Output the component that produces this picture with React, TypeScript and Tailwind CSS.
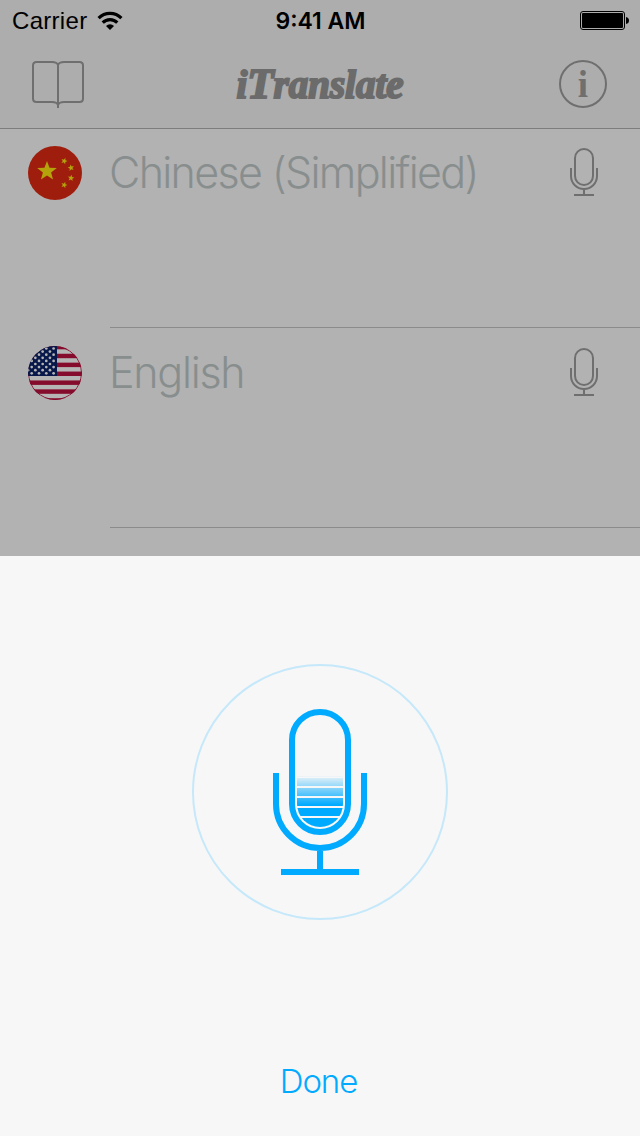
import type { ReactNode } from "react";

const starPath = (cx: number, cy: number, r: number, rotate = 0) => {
	const points: string[] = [];
	for (let i = 0; i < 10; i++) {
		const radius = i % 2 === 0 ? r : r * 0.42;
		const angle = ((i * 36 - 90 + rotate) * Math.PI) / 180;
		points.push(
			`${(cx + radius * Math.cos(angle)).toFixed(2)},${(cy + radius * Math.sin(angle)).toFixed(2)}`,
		);
	}
	return `M${points.join("L")}Z`;
};

function ChinaFlag() {
	return (
		<svg viewBox="0 0 54 54" className="size-[54px]">
			<circle cx="27" cy="27" r="27" fill="#9f1d0d" />
			<g fill="#b4a30a">
				<path d={starPath(19, 25.2, 10.3)} />
				<path d={starPath(36.2, 15, 3.4, 20)} />
				<path d={starPath(43, 21.8, 3.4, -12)} />
				<path d={starPath(43, 32, 3.4, 8)} />
				<path d={starPath(36.2, 39, 3.4, 18)} />
			</g>
		</svg>
	);
}

function UsaFlag() {
	const stripes = [0, 2, 4, 6, 8, 10, 12];
	const rows = [0, 1, 2, 3, 4, 5, 6, 7, 8];
	const cols = [0, 1, 2, 3];

	return (
		<svg viewBox="0 0 54 54" className="size-[54px]">
			<clipPath id="usa">
				<circle cx="27" cy="27" r="27" />
			</clipPath>
			<g clipPath="url(#usa)">
				<rect width="54" height="54" fill="#b5b5b5" />
				{stripes.map((n) => (
					<rect key={n} y={n * 4.45 - 1.15} width="54" height="4.45" fill="#850c2c" />
				))}
				<circle cx="27" cy="27" r="26.5" fill="none" stroke="#850c2c" />
				<rect width="29" height="30" fill="#08184a" />
				{rows.map((row) =>
					cols.map((col) => (
						<circle
							key={`${row}-${col}`}
							cx={25.6 - col * 7.3 - (row % 2) * 3.65}
							cy={2.5 + row * 3.1}
							r="1.35"
							fill="#b5b5b5"
						/>
					)),
				)}
			</g>
		</svg>
	);
}

function MicIcon() {
	return (
		<svg viewBox="0 0 28 48" className="h-12 w-7" fill="none" stroke="#6f6f6f" strokeWidth="2">
			<rect x="5" y="1" width="18" height="36" rx="9" />
			<path d="M1 20v8a13 13 0 0 0 26 0v-8M14 41v6M4 47h20" />
		</svg>
	);
}

function BookIcon() {
	return (
		<svg viewBox="0 0 52 48" className="h-12 w-[52px]" fill="none" stroke="#6f6f6f" strokeWidth="2">
			<path d="M26 48V5c-.8-2-2.5-3-6-3H4.500Q1 2 1 5.500v33Q1 42 4.500 42H20c3.500 0 5.300 1 6 3M26 5c.8-2 2.500-3 6-3h15.500Q51 2 51 5.500v33q0 3.500-3.500 3.500H32c-3.500 0-5.300 1-6 3" />
		</svg>
	);
}

function InfoIcon() {
	return (
		<svg viewBox="0 0 48 48" className="size-12">
			<circle cx="24" cy="24" r="23" fill="none" stroke="#6f6f6f" strokeWidth="2" />
			<text
				x="24"
				y="37"
				textAnchor="middle"
				fill="#6f6f6f"
				className="font-['Liberation_Serif',serif] text-[37px] font-bold"
			>
				i
			</text>
		</svg>
	);
}

function WifiIcon() {
	return (
		<svg viewBox="0 0 26 20" className="h-5 w-[26px]" fill="none" stroke="#000" strokeWidth="3.2">
			<path d="M1.600 7.200a16 16 0 0 1 22.800 0M5.700 11.600a10.300 10.300 0 0 1 14.600 0" />
			<path d="M13 19l-4-4.100a5.800 5.800 0 0 1 8 0z" fill="#000" stroke="none" />
		</svg>
	);
}

function BatteryIcon() {
	return (
		<svg viewBox="0 0 49 19" className="h-[19px] w-[49px]">
			<rect x=".5" y=".5" width="44" height="18" rx="2.500" fill="none" stroke="#000" />
			<rect x="2" y="2" width="41" height="15" rx="1" />
			<path d="M46 6q3 .5 3 3.500T46 13z" />
		</svg>
	);
}

function Recorder() {
	return (
		<svg viewBox="0 0 256 256" className="size-64">
			<defs>
				<linearGradient id="level" gradientUnits="userSpaceOnUse" x1="0" y1="110" x2="0" y2="141">
					<stop stopColor="#00aaff" stopOpacity="0" />
					<stop offset="1" stopColor="#00aaff" />
				</linearGradient>
				<clipPath id="capsule">
					<path d="M105 100h46v40a23 23 0 0 1-46 0z" />
				</clipPath>
			</defs>
			<circle cx="128" cy="128" r="127" fill="none" stroke="#c5e8fa" strokeWidth="2" />
			<g clipPath="url(#capsule)" fill="url(#level)">
				<path d="M105 112h46v0.500h-46zM105 114h46v8h-46zM105 124h46v8h-46zM105 134h46v8h-46zM105 144h46v8h-46zM105 154h46v10h-46z" />
			</g>
			<g fill="none" stroke="#00aaff" strokeWidth="6">
				<rect x="100" y="48" width="56" height="120" rx="28" />
				<path d="M84 109v31a44 44 0 0 0 88 0v-31M128 184v22M89 208h78" />
			</g>
		</svg>
	);
}

type LanguageRowProps = {
	flag: ReactNode;
	children: ReactNode;
};

function LanguageRow({ flag, children }: LanguageRowProps) {
	return (
		<section className="flex h-[200px] pl-7">
			<div className="w-[82px] pt-[18px]">{flag}</div>
			<div className="flex flex-1 items-start justify-between border-b border-[#8b8b8b] pr-[42px]">
				<h2 className="-ml-px pt-[18px] font-[Inter,sans-serif] text-[43px] leading-[52px] font-light text-[#888e8e]">
					{children}
				</h2>
				<button type="button" className="pt-5" aria-label="Speak">
					<MicIcon />
				</button>
			</div>
		</section>
	);
}

export default function App() {
	return (
		<div className="flex h-[1136px] w-[640px] flex-col overflow-hidden bg-[#b2b2b2] font-['Liberation_Sans',sans-serif]">
			<header className="h-[129px] border-b border-[#7d7d7d] bg-[#adadad]">
				<div className="grid h-10 grid-cols-3 items-center pr-[11px] pl-3">
					<div className="flex items-center gap-2.5">
						<span className="pt-px text-[24px] leading-10 tracking-[0.3px]">Carrier</span>
						<WifiIcon />
					</div>
					<span className="pt-px text-center font-[Inter,sans-serif] text-[23px] leading-10 font-semibold">
						9:41 AM
					</span>
					<div className="flex justify-end">
						<BatteryIcon />
					</div>
				</div>
				<nav className="flex h-[88px] items-center justify-between pr-[33px] pl-8">
					<button type="button" aria-label="Phrasebook">
						<BookIcon />
					</button>
					<h1 className="pr-[3px] font-['Liberation_Serif',serif] text-[39px] leading-[48px] font-bold text-[#6b6b6b] italic [-webkit-text-stroke:2px_#6b6b6b]">
						i<span className="text-[43px]">T</span>ranslate
					</h1>
					<button type="button" aria-label="Info">
						<InfoIcon />
					</button>
				</nav>
			</header>

			<main className="-mt-px h-[428px]">
				<LanguageRow flag={<ChinaFlag />}>
					<span className="tracking-[-1.68px]">Chinese (Simplified)</span>
				</LanguageRow>
				<LanguageRow flag={<UsaFlag />}>
					<span className="tracking-[-1.3px]">English</span>
				</LanguageRow>
			</main>

			<footer className="flex flex-1 flex-col items-center bg-[#f7f7f7] pt-[108px]">
				<Recorder />
				<button
					type="button"
					className="mt-[141px] pr-[3px] font-[Inter,sans-serif] text-[33px] leading-10 font-light tracking-[-1.1px] text-[#00aaff]"
				>
					Done
				</button>
			</footer>
		</div>
	);
}
